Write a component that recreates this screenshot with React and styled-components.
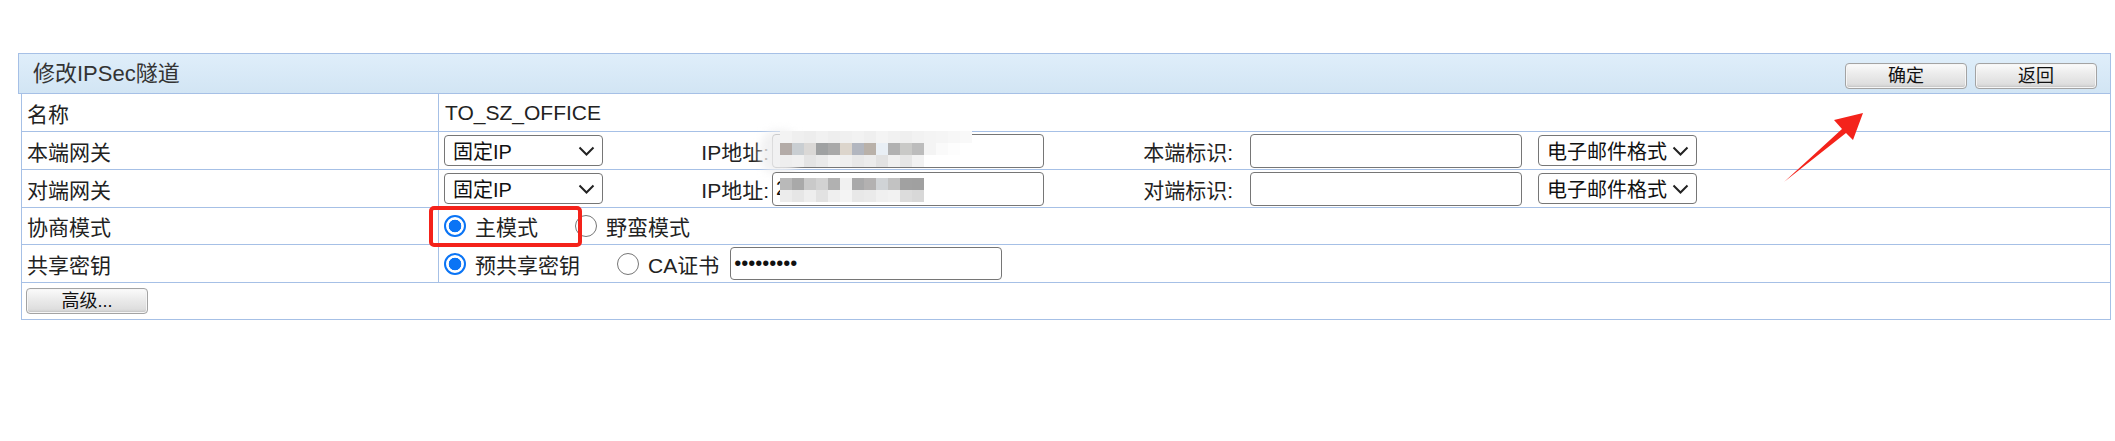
import React from "react";
import styled, { createGlobalStyle } from "styled-components";

const GlobalStyle = createGlobalStyle`
  body {
    margin: 0;
    background: #fff;
    color: #222;
    font-family: "Liberation Sans", "Noto Sans CJK SC", sans-serif;
  }
`;

const LINE = "#a6c0e6";

const Page = styled.div`
  position: relative;
  padding: 53px 4px 0 18px;
`;

const Header = styled.div`
  height: 41px;
  box-sizing: border-box;
  display: flex;
  align-items: center;
  justify-content: space-between;
  padding: 0 13px 0 14px;
  border: 1px solid ${LINE};
  background: linear-gradient(#dfeefa, #d2e5f4);
`;

const Title = styled.div`
  font-size: 22px;
  line-height: 1;
  color: #333;
`;

const ButtonGroup = styled.div`
  display: flex;
  gap: 8px;
  margin-top: 4px;
`;

const Btn = styled.button`
  width: 122px;
  height: 26px;
  box-sizing: border-box;
  padding: 0;
  border: 1px solid #a3a3a3;
  border-radius: 4px;
  background: linear-gradient(#fbfbfb, #ececec 40%, #d9d9d9);
  box-shadow: inset 0 0 0 1px #f6f6f6, inset 0 -2px 2px #c4c4c4;
  font: 18px "Liberation Sans", "Noto Sans CJK SC", sans-serif;
  line-height: 24px;
  color: #111;
`;

const Table = styled.div`
  margin-left: 3px;
  border: 1px solid ${LINE};
  border-top: none;
`;

const Row = styled.div`
  display: grid;
  grid-template-columns: ${({ $full }) => ($full ? "1fr" : "417px 1fr")};
  height: ${({ $h }) => $h || 38}px;
  box-sizing: border-box;
  border-bottom: ${({ $last }) => ($last ? "none" : `1px solid ${LINE}`)};
`;

const LabelCell = styled.div`
  display: flex;
  align-items: center;
  padding-left: 5px;
  border-right: 1px solid ${LINE};
  font-size: 21px;
`;

const ValueCell = styled.div`
  position: relative;
  display: flex;
  align-items: center;
  padding-left: ${({ $pl }) => ($pl === undefined ? 5 : $pl)}px;
  font-size: 21px;
`;

const SelectBox = styled.div`
  width: 159px;
  height: 31px;
  box-sizing: border-box;
  flex-shrink: 0;
  display: flex;
  align-items: center;
  justify-content: space-between;
  padding: 0 7px 0 8px;
  margin-left: ${({ $ml }) => $ml || 0}px;
  border: 1px solid #767676;
  border-radius: 4px;
  background: #fff;
  font-size: 20px;
  color: #111;
`;

const FieldLabel = styled.div`
  width: ${({ $w }) => $w}px;
  flex-shrink: 0;
  text-align: right;
  font-size: 21px;
`;

const InputWrap = styled.div`
  position: relative;
  flex-shrink: 0;
  margin-left: ${({ $ml }) => $ml || 0}px;
`;

const TextInput = styled.input`
  display: block;
  width: 272px;
  height: ${({ $h }) => $h || 34}px;
  box-sizing: border-box;
  padding: 0 3px;
  border: 1px solid #767676;
  border-radius: 4px;
  background: #fff;
  font: 20px "Liberation Sans", "Noto Sans CJK SC", sans-serif;
  color: #111;
  outline: none;
`;

const Mosaic = styled.div`
  position: absolute;
  left: ${({ $x }) => $x}px;
  top: ${({ $y }) => $y}px;
  display: grid;
  grid-template-columns: repeat(${({ $cols }) => $cols}, 12px);
  grid-auto-rows: 12px;
  filter: blur(0.4px);
`;

const Tile = styled.span`
  background: ${({ $c }) => $c};
`;

const Smear = styled.div`
  position: absolute;
  left: -12px;
  top: -4px;
  width: 40px;
  height: ${({ $h }) => $h}px;
  border-radius: 18px;
  background: rgba(238, 238, 240, 0.85);
  filter: blur(4px);
`;

const RadioOption = styled.label`
  display: flex;
  align-items: center;
  gap: 9px;
  margin-left: ${({ $ml }) => $ml || 0}px;
  font-size: 21px;
  flex-shrink: 0;
`;

const RadioDot = styled.span`
  width: 22px;
  height: 22px;
  box-sizing: border-box;
  border-radius: 50%;
  border: ${({ $on }) => ($on ? "2px solid #0a74f5" : "1.5px solid #767676")};
  background: ${({ $on }) =>
    $on ? "radial-gradient(circle, #0a74f5 0 6px, #fff 6.6px)" : "#fff"};
`;

const Highlight = styled.div`
  position: absolute;
  left: -10px;
  top: -2px;
  width: 153px;
  height: 41px;
  box-sizing: border-box;
  border: 4px solid #f4221a;
  border-radius: 5px;
  pointer-events: none;
`;

const SmallBtn = styled(Btn)`
  font-size: 18px;
`;

const Arrow = styled.svg`
  position: absolute;
  left: 1775px;
  top: 105px;
  overflow: visible;
`;

const Chevron = () => (
  <svg width="17" height="10" viewBox="0 0 17 10">
    <path d="M1.5 1.5 L8.5 8.5 L15.5 1.5" fill="none" stroke="#222" strokeWidth="2" />
  </svg>
);

const Select = ({ children, ml }) => (
  <SelectBox $ml={ml}>
    <span>{children}</span>
    <Chevron />
  </SelectBox>
);

const Radio = ({ on, children, ml }) => (
  <RadioOption $ml={ml}>
    <RadioDot $on={on} />
    {children}
  </RadioOption>
);

const mosaicA = [
  ["#f3f3f3", "#efefef", "#ededed", "#f1f1f1", "#eeeeee", "#f0f0f0", "#f2f2f2", "#efefef", "#f4f4f4", "#f1f1f1", "#efefef", "#f2f2f2", "#f4f4f4", "#f5f5f5", "#f7f7f7", "#f9f9f9"],
  ["#b3aba7", "#c9ced2", "#dad8d6", "#9fa1a2", "#a9a9a9", "#dcd5cc", "#b2b6bf", "#b9b1a9", "#e9eff5", "#b1b1b1", "#c9c9c7", "#bcbcbc", "#f4f4f4", "#fafafa", "#fdfdfd", "#ffffff"],
  ["#eeeeee", "#f0f0f0", "#e4e4e4", "#eaeaea", "#f3f3f3", "#efefef", "#e8e8e8", "#ececec", "#e2e2e2", "#f0f0f0", "#e6e6e6", "#f2f2f2", "#ffffff", "#ffffff", "#ffffff", "#ffffff"],
];

const mosaicB = [
  ["#b9b9b9", "#a9a9a9", "#c9c9c9", "#d2d2d2", "#b1b1b1", "#f1f1f1", "#a9a9aa", "#b3b1b1", "#d0d3d6", "#c2c2c2", "#a1a1a1", "#a0a0a0"],
  ["#ececec", "#e6e6e6", "#eeeeee", "#e2e2e2", "#efefef", "#f4f4f4", "#e8e8e8", "#eaeaea", "#f0f0f0", "#f2f2f2", "#dcdcdc", "#d8d8d8"],
];

const Pixelated = ({ rows, x, y }) => (
  <Mosaic $x={x} $y={y} $cols={rows[0].length}>
    {rows.flat().map((c, i) => (
      <Tile key={i} $c={c} />
    ))}
  </Mosaic>
);

export default function App() {
  return (
    <Page>
      <GlobalStyle />
      <Header>
        <Title>修改IPSec隧道</Title>
        <ButtonGroup>
          <Btn>确定</Btn>
          <Btn>返回</Btn>
        </ButtonGroup>
      </Header>
      <Table>
        <Row>
          <LabelCell>名称</LabelCell>
          <ValueCell $pl={6}>TO_SZ_OFFICE</ValueCell>
        </Row>
        <Row>
          <LabelCell>本端网关</LabelCell>
          <ValueCell>
            <Select>固定IP</Select>
            <FieldLabel $w={166}>IP地址:</FieldLabel>
            <InputWrap $ml={3}>
              <TextInput defaultValue="" />
              <Smear $h={44} />
              <Pixelated rows={mosaicA} x={8} y={-3} />
            </InputWrap>
            <FieldLabel $w={189}>本端标识:</FieldLabel>
            <InputWrap $ml={17}>
              <TextInput defaultValue="" />
            </InputWrap>
            <Select ml={16}>电子邮件格式</Select>
          </ValueCell>
        </Row>
        <Row>
          <LabelCell>对端网关</LabelCell>
          <ValueCell>
            <Select>固定IP</Select>
            <FieldLabel $w={166}>IP地址:</FieldLabel>
            <InputWrap $ml={3}>
              <TextInput defaultValue="21" />
              <Pixelated rows={mosaicB} x={8} y={6} />
            </InputWrap>
            <FieldLabel $w={189}>对端标识:</FieldLabel>
            <InputWrap $ml={17}>
              <TextInput defaultValue="" />
            </InputWrap>
            <Select ml={16}>电子邮件格式</Select>
          </ValueCell>
        </Row>
        <Row $h={37}>
          <LabelCell>协商模式</LabelCell>
          <ValueCell>
            <Radio on>主模式</Radio>
            <Radio ml={37}>野蛮模式</Radio>
            <Highlight />
          </ValueCell>
        </Row>
        <Row>
          <LabelCell>共享密钥</LabelCell>
          <ValueCell>
            <Radio on>预共享密钥</Radio>
            <Radio ml={37}>CA证书</Radio>
            <InputWrap $ml={11}>
              <TextInput type="password" defaultValue="123456789" $h={33} />
            </InputWrap>
          </ValueCell>
        </Row>
        <Row $full $h={36} $last>
          <ValueCell $pl={4}>
            <SmallBtn>高级...</SmallBtn>
          </ValueCell>
        </Row>
      </Table>
      <Arrow width="95" height="85" viewBox="0 0 95 85">
        <polygon points="9,77 71,28 78,35 88,8 59,15 67,24" fill="#f4231b" />
      </Arrow>
    </Page>
  );
}
